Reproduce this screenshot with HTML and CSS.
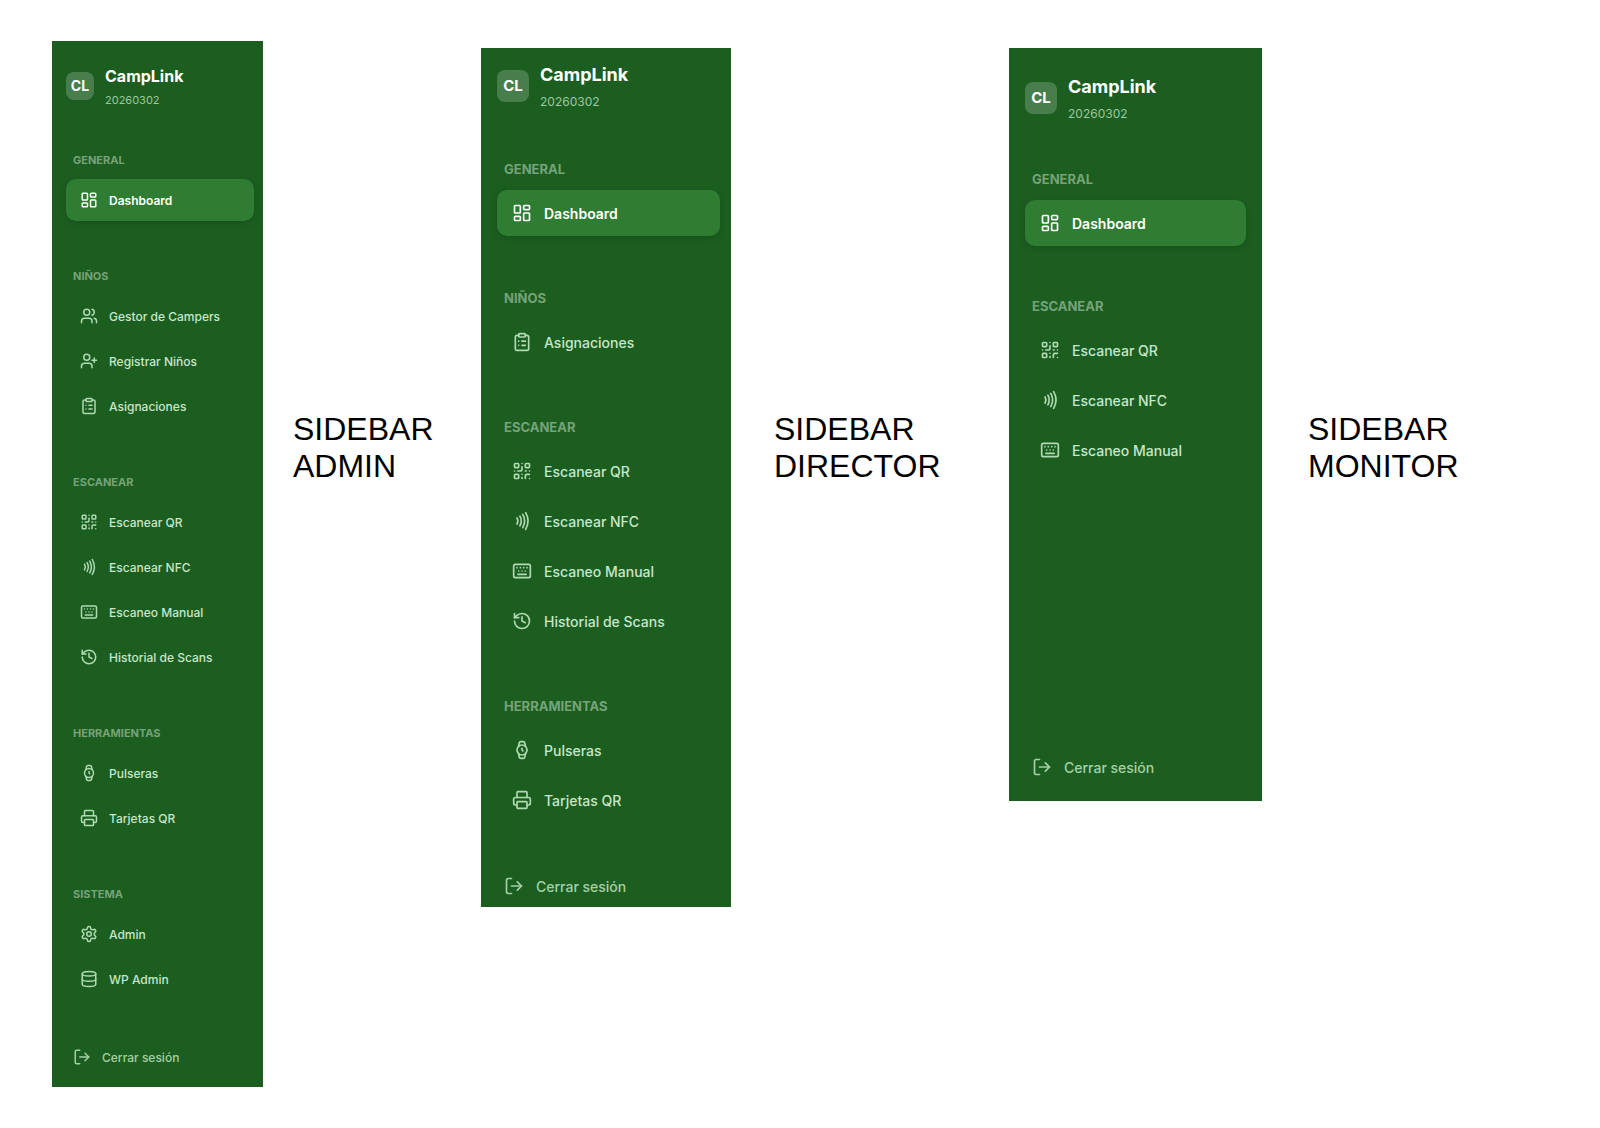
FILE: index.html
```html
<!DOCTYPE html>
<html lang="es">
<head>
    <meta charset="UTF-8">
    <meta name="viewport" content="width=device-width, initial-scale=1.0">
    <title>CampLink - Sidebars</title>
    <link rel="stylesheet" href="styles.css">
</head>
<body>
<!-- Iconos compartidos -->
<svg class="sprite" aria-hidden="true">
    <symbol id="i-dashboard" viewBox="0 0 24 24"><rect x="3" y="3" width="7" height="9" rx="1"/><rect x="14" y="3" width="7" height="5" rx="1"/><rect x="14" y="12" width="7" height="9" rx="1"/><rect x="3" y="16" width="7" height="5" rx="1"/></symbol>
    <symbol id="i-users" viewBox="0 0 24 24"><path d="M16 21v-2a4 4 0 0 0-4-4H6a4 4 0 0 0-4 4v2"/><circle cx="9" cy="7" r="4"/><path d="M22 21v-2a4 4 0 0 0-3-3.87"/><path d="M16 3.13a4 4 0 0 1 0 7.75"/></symbol>
    <symbol id="i-user-plus" viewBox="0 0 24 24"><path d="M16 21v-2a4 4 0 0 0-4-4H6a4 4 0 0 0-4 4v2"/><circle cx="9" cy="7" r="4"/><path d="M19 8v6"/><path d="M22 11h-6"/></symbol>
    <symbol id="i-clipboard" viewBox="0 0 24 24"><rect x="8" y="2" width="8" height="4" rx="1"/><path d="M16 4h2a2 2 0 0 1 2 2v14a2 2 0 0 1-2 2H6a2 2 0 0 1-2-2V6a2 2 0 0 1 2-2h2"/><path d="M12 11h4"/><path d="M12 16h4"/><path d="M8 11h.01"/><path d="M8 16h.01"/></symbol>
    <symbol id="i-qr" viewBox="0 0 24 24"><rect x="3" y="3" width="5" height="5" rx="1"/><rect x="16" y="3" width="5" height="5" rx="1"/><rect x="3" y="16" width="5" height="5" rx="1"/><path d="M21 16h-3a2 2 0 0 0-2 2v3"/><path d="M21 21v.01"/><path d="M12 7v3a2 2 0 0 1-2 2H7"/><path d="M3 12h.01"/><path d="M12 3h.01"/><path d="M12 16v.01"/><path d="M16 12h1"/><path d="M21 12v.01"/><path d="M12 21v-1"/></symbol>
    <symbol id="i-nfc" viewBox="0 0 24 24"><path d="M6 8.32a7.43 7.43 0 0 1 0 7.36"/><path d="M9.46 6.21a11.76 11.76 0 0 1 0 11.58"/><path d="M12.91 4.1a15.91 15.91 0 0 1 .01 15.8"/><path d="M16.37 2a20.16 20.16 0 0 1 0 20"/></symbol>
    <symbol id="i-keyboard" viewBox="0 0 24 24"><rect x="2" y="4" width="20" height="16" rx="2"/><path d="M6 8h.01"/><path d="M10 8h.01"/><path d="M14 8h.01"/><path d="M18 8h.01"/><path d="M8 12h.01"/><path d="M12 12h.01"/><path d="M16 12h.01"/><path d="M7 16h10"/></symbol>
    <symbol id="i-history" viewBox="0 0 24 24"><path d="M3 12a9 9 0 1 0 9-9 9.75 9.75 0 0 0-6.74 2.74L3 8"/><path d="M3 3v5h5"/><path d="M12 7v5l4 2"/></symbol>
    <symbol id="i-watch" viewBox="0 0 24 24"><circle cx="12" cy="12" r="6"/><path d="M12 10v2l1 1"/><path d="m16.13 7.66-.81-4.05a2 2 0 0 0-2-1.61h-2.68a2 2 0 0 0-2 1.61l-.78 4.05"/><path d="m7.88 16.36.8 4a2 2 0 0 0 2 1.61h2.72a2 2 0 0 0 2-1.61l.81-4.05"/></symbol>
    <symbol id="i-printer" viewBox="0 0 24 24"><path d="M6 18H4a2 2 0 0 1-2-2v-5a2 2 0 0 1 2-2h16a2 2 0 0 1 2 2v5a2 2 0 0 1-2 2h-2"/><path d="M6 9V3a1 1 0 0 1 1-1h10a1 1 0 0 1 1 1v6"/><rect x="6" y="14" width="12" height="8" rx="1"/></symbol>
    <symbol id="i-settings" viewBox="0 0 24 24"><path d="M12.22 2h-.44a2 2 0 0 0-2 2v.18a2 2 0 0 1-1 1.73l-.43.25a2 2 0 0 1-2 0l-.15-.08a2 2 0 0 0-2.73.73l-.22.38a2 2 0 0 0 .73 2.73l.15.1a2 2 0 0 1 1 1.72v.51a2 2 0 0 1-1 1.74l-.15.09a2 2 0 0 0-.73 2.73l.22.38a2 2 0 0 0 2.73.73l.15-.08a2 2 0 0 1 2 0l.43.25a2 2 0 0 1 1 1.73V20a2 2 0 0 0 2 2h.44a2 2 0 0 0 2-2v-.18a2 2 0 0 1 1-1.73l.43-.25a2 2 0 0 1 2 0l.15.08a2 2 0 0 0 2.73-.73l.22-.39a2 2 0 0 0-.73-2.73l-.15-.08a2 2 0 0 1-1-1.74v-.5a2 2 0 0 1 1-1.74l.15-.09a2 2 0 0 0 .73-2.73l-.22-.38a2 2 0 0 0-2.73-.73l-.15.08a2 2 0 0 1-2 0l-.43-.25a2 2 0 0 1-1-1.73V4a2 2 0 0 0-2-2z"/><circle cx="12" cy="12" r="3"/></symbol>
    <symbol id="i-database" viewBox="0 0 24 24"><ellipse cx="12" cy="5" rx="9" ry="3"/><path d="M3 5v14a9 3 0 0 0 18 0V5"/><path d="M3 12a9 3 0 0 0 18 0"/></symbol>
    <symbol id="i-logout" viewBox="0 0 24 24"><path d="M9 21H5a2 2 0 0 1-2-2V5a2 2 0 0 1 2-2h4"/><path d="m16 17 5-5-5-5"/><path d="M21 12H9"/></symbol>
</svg>

<main class="board">
    <aside class="sidebar sidebar-admin">
        <div class="brand">
            <span class="logo">CL</span>
            <div>
                <p class="brand-name">CampLink</p>
                <p class="brand-date">20260302</p>
            </div>
        </div>
        <nav class="nav">
            <section class="group">
                <h2 class="group-title">GENERAL</h2>
                <a href="#" class="item active"><svg class="icon"><use href="#i-dashboard"/></svg>Dashboard</a>
            </section>
            <section class="group">
                <h2 class="group-title">NIÑOS</h2>
                <a href="#" class="item"><svg class="icon"><use href="#i-users"/></svg>Gestor de Campers</a>
                <a href="#" class="item"><svg class="icon"><use href="#i-user-plus"/></svg>Registrar Niños</a>
                <a href="#" class="item"><svg class="icon"><use href="#i-clipboard"/></svg>Asignaciones</a>
            </section>
            <section class="group">
                <h2 class="group-title">ESCANEAR</h2>
                <a href="#" class="item"><svg class="icon"><use href="#i-qr"/></svg>Escanear QR</a>
                <a href="#" class="item"><svg class="icon"><use href="#i-nfc"/></svg>Escanear NFC</a>
                <a href="#" class="item"><svg class="icon"><use href="#i-keyboard"/></svg>Escaneo Manual</a>
                <a href="#" class="item"><svg class="icon"><use href="#i-history"/></svg>Historial de Scans</a>
            </section>
            <section class="group">
                <h2 class="group-title">HERRAMIENTAS</h2>
                <a href="#" class="item"><svg class="icon"><use href="#i-watch"/></svg>Pulseras</a>
                <a href="#" class="item"><svg class="icon"><use href="#i-printer"/></svg>Tarjetas QR</a>
            </section>
            <section class="group">
                <h2 class="group-title">SISTEMA</h2>
                <a href="#" class="item"><svg class="icon"><use href="#i-settings"/></svg>Admin</a>
                <a href="#" class="item"><svg class="icon"><use href="#i-database"/></svg>WP Admin</a>
            </section>
        </nav>
        <button class="logout"><svg class="icon"><use href="#i-logout"/></svg>Cerrar sesión</button>
    </aside>
    <p class="caption caption-admin">SIDEBAR<br>ADMIN</p>

    <aside class="sidebar sidebar-director">
        <div class="brand">
            <span class="logo">CL</span>
            <div>
                <p class="brand-name">CampLink</p>
                <p class="brand-date">20260302</p>
            </div>
        </div>
        <nav class="nav">
            <section class="group">
                <h2 class="group-title">GENERAL</h2>
                <a href="#" class="item active"><svg class="icon"><use href="#i-dashboard"/></svg>Dashboard</a>
            </section>
            <section class="group">
                <h2 class="group-title">NIÑOS</h2>
                <a href="#" class="item"><svg class="icon"><use href="#i-clipboard"/></svg>Asignaciones</a>
            </section>
            <section class="group">
                <h2 class="group-title">ESCANEAR</h2>
                <a href="#" class="item"><svg class="icon"><use href="#i-qr"/></svg>Escanear QR</a>
                <a href="#" class="item"><svg class="icon"><use href="#i-nfc"/></svg>Escanear NFC</a>
                <a href="#" class="item"><svg class="icon"><use href="#i-keyboard"/></svg>Escaneo Manual</a>
                <a href="#" class="item"><svg class="icon"><use href="#i-history"/></svg>Historial de Scans</a>
            </section>
            <section class="group">
                <h2 class="group-title">HERRAMIENTAS</h2>
                <a href="#" class="item"><svg class="icon"><use href="#i-watch"/></svg>Pulseras</a>
                <a href="#" class="item"><svg class="icon"><use href="#i-printer"/></svg>Tarjetas QR</a>
            </section>
        </nav>
        <button class="logout"><svg class="icon"><use href="#i-logout"/></svg>Cerrar sesión</button>
    </aside>
    <p class="caption caption-director">SIDEBAR<br>DIRECTOR</p>

    <aside class="sidebar sidebar-monitor">
        <div class="brand">
            <span class="logo">CL</span>
            <div>
                <p class="brand-name">CampLink</p>
                <p class="brand-date">20260302</p>
            </div>
        </div>
        <nav class="nav">
            <section class="group">
                <h2 class="group-title">GENERAL</h2>
                <a href="#" class="item active"><svg class="icon"><use href="#i-dashboard"/></svg>Dashboard</a>
            </section>
            <section class="group">
                <h2 class="group-title">ESCANEAR</h2>
                <a href="#" class="item"><svg class="icon"><use href="#i-qr"/></svg>Escanear QR</a>
                <a href="#" class="item"><svg class="icon"><use href="#i-nfc"/></svg>Escanear NFC</a>
                <a href="#" class="item"><svg class="icon"><use href="#i-keyboard"/></svg>Escaneo Manual</a>
            </section>
        </nav>
        <button class="logout"><svg class="icon"><use href="#i-logout"/></svg>Cerrar sesión</button>
    </aside>
    <p class="caption caption-monitor">SIDEBAR<br>MONITOR</p>
</main>
</body>
</html>
```
FILE: styles.css
```css
* {
    box-sizing: border-box;
}

body {
    margin: 0;
    background-color: white;
    font-family: Inter, "Liberation Sans", sans-serif;
}

p, h2 {
    margin: 0;
}

.sprite {
    display: none;
}

.board {
    display: grid;
    grid-template-columns: 211fr 218fr 250fr 278fr 253fr 338fr;
    align-items: start;
    padding: 41px 0 41px 52px;
}

/* Sidebar */
.sidebar {
    display: flex;
    flex-direction: column;
    background-color: #1b5e20;
    color: white;
    font-size: 14px;
}

.brand {
    display: flex;
    align-items: center;
    gap: 11px;
}

.logo {
    display: flex;
    align-items: center;
    justify-content: center;
    width: 32px;
    height: 32px;
    margin-bottom: 4px;
    padding-bottom: 2px;
    border-radius: 8px;
    background-color: rgba(255, 255, 255, 0.2);
    font-size: 15px;
    font-weight: 700;
}

.brand-name {
    font-size: 18px;
    font-weight: 700;
    line-height: 28px;
}

.brand-date {
    color: #9dc79f;
    font-size: 12px;
    line-height: 26px;
}

.nav {
    display: flex;
    flex-direction: column;
    gap: 54px;
}

.group {
    display: flex;
    flex-direction: column;
    gap: 4px;
}

.group-title {
    margin-bottom: 9px;
    padding-left: 7px;
    color: #76a379;
    font-size: 13px;
    font-weight: 700;
    line-height: 16px;
}

.item {
    display: flex;
    align-items: center;
    gap: 12px;
    height: 46px;
    padding-left: 15px;
    border-radius: 10px;
    color: #c8e6c9;
    font-weight: 500;
    text-decoration: none;
}

.item:hover {
    background-color: rgba(255, 255, 255, 0.08);
}

.item.active {
    background-color: #2e7d32;
    box-shadow: 0 2px 6px rgba(0, 0, 0, 0.15);
    color: white;
    font-weight: 600;
}

.icon {
    flex-shrink: 0;
    width: 20px;
    height: 20px;
    fill: none;
    stroke: #b0dab2;
    stroke-width: 2;
    stroke-linecap: round;
    stroke-linejoin: round;
}

.active .icon {
    stroke: white;
}

.logout {
    display: flex;
    align-items: center;
    gap: 12px;
    height: 40px;
    padding: 0 0 0 7px;
    border: none;
    background-color: transparent;
    color: #a5d0a7;
    font-family: inherit;
    font-size: inherit;
    font-weight: 500;
    cursor: pointer;
}

.logout .icon {
    stroke: currentColor;
}

/* Admin: version compacta */
.sidebar-admin {
    padding: 23px 9px 10px 14px;
    font-size: 12px;
}

.sidebar-admin .brand {
    margin-bottom: 40px;
}

.sidebar-admin .logo {
    width: 28px;
    height: 28px;
    font-size: 14px;
}

.sidebar-admin .brand-name {
    font-size: 16px;
    line-height: 24px;
}

.sidebar-admin .brand-date {
    font-size: 11px;
    line-height: 24px;
}

.sidebar-admin .nav {
    gap: 47px;
}

.sidebar-admin .group {
    gap: 3px;
}

.sidebar-admin .group-title {
    margin-bottom: 8px;
    font-size: 11px;
}

.sidebar-admin .item {
    gap: 11px;
    height: 42px;
    padding-left: 14px;
}

.sidebar-admin .icon {
    width: 18px;
    height: 18px;
}

.sidebar-admin .logout {
    gap: 11px;
    margin-top: 37px;
}

/* Director */
.sidebar-director {
    margin-top: 7px;
    padding: 13px 11px 1px 16px;
}

.sidebar-director .brand {
    margin-bottom: 46px;
}

.sidebar-director .logout {
    margin-top: 43px;
}

/* Monitor */
.sidebar-monitor {
    min-height: 753px;
    margin-top: 7px;
    padding: 25px 16px 14px;
}

.sidebar-monitor .brand {
    margin-bottom: 44px;
}

.sidebar-monitor .nav {
    gap: 52px;
}

.sidebar-monitor .logout {
    margin-top: auto;
}

/* Titulos al lado de cada sidebar */
.caption {
    margin-top: 370px;
    color: black;
    font-family: "Liberation Sans", Arial, sans-serif;
    font-size: 32px;
    line-height: 37px;
}

.caption-admin {
    padding-left: 30px;
}

.caption-director {
    padding-left: 43px;
}

.caption-monitor {
    padding-left: 46px;
}
```
